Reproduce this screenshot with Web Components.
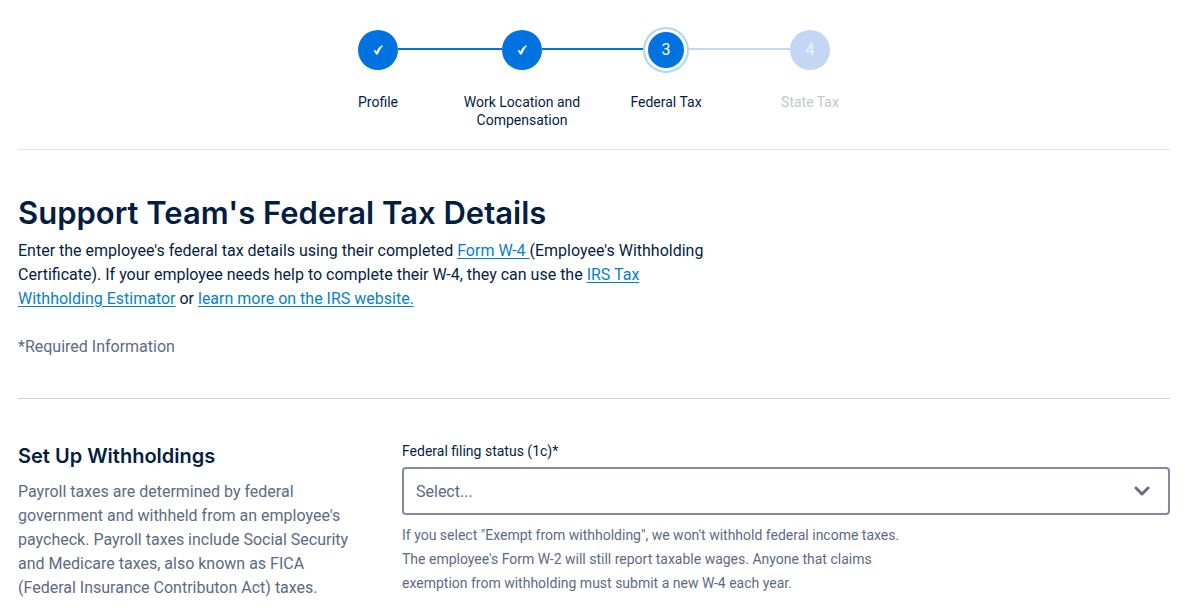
<!DOCTYPE html>
<html lang="en">
<head>
  <meta charset="utf-8">
  <meta name="viewport" content="width=device-width, initial-scale=1">
  <title>Federal Tax Details</title>
  <style>
    :root {
      --navy: #041e42;
      --slate: #5c6b84;
      --blue: #0073e0;
      --link: #0a7fc9;
      --pale-blue: #c3d6f4;
    }

    body {
      margin: 0;
      background: #fff;
      color: var(--navy);
      font: 16px/24px Roboto, "Liberation Sans", sans-serif;
    }
  </style>
</head>
<body>
  <tax-page>
    <step-tracker slot="progress">
      <step-item state="done" number="1">Profile</step-item>
      <step-item state="done" number="2">Work Location and Compensation</step-item>
      <step-item state="current" number="3">Federal Tax</step-item>
      <step-item state="upcoming" number="4">State Tax</step-item>
    </step-tracker>

    <page-intro>
      <span slot="title">Support Team's Federal Tax Details</span>
      Enter the employee's federal tax details using their completed
      <a href="#form-w4">Form W-4 </a>(Employee's Withholding Certificate). If your
      employee needs help to complete their W-4, they can use the
      <a href="#estimator">IRS Tax Withholding Estimator</a> or
      <a href="#irs">learn more on the IRS website.</a>
      <span slot="note">*Required Information</span>
    </page-intro>

    <form-section>
      <span slot="title">Set Up Withholdings</span>
      <span slot="description">Payroll taxes are determined by federal government and withheld from an employee's paycheck. Payroll taxes include Social Security and Medicare taxes, also known as FICA (Federal Insurance Contributon Act) taxes.</span>
      <select-field label="Federal filing status (1c)*" placeholder="Select...">
        If you select "Exempt from withholding", we won't withhold federal income taxes. The employee's Form W-2 will still report taxable wages. Anyone that claims exemption from withholding must submit a new W-4 each year.
      </select-field>
    </form-section>
  </tax-page>

  <script>
    class BaseElement extends HTMLElement {
      constructor() {
        super();
        this.attachShadow({ mode: 'open' });
      }

      connectedCallback() {
        this.shadowRoot.innerHTML = this.render();
      }
    }

    class TaxPage extends BaseElement {
      render() {
        return `
          <style>
            :host {
              display: block;
              padding: 27px 23px 16px 18px;
            }
          </style>

          <slot name="progress"></slot>
          <main><slot></slot></main>
        `;
      }
    }

    class StepTracker extends BaseElement {
      render() {
        return `
          <style>
            :host {
              display: block;
              padding-bottom: 20px;
              border-bottom: 1px solid #e4e5e7;
            }

            nav {
              display: flex;
              justify-content: center;
            }
          </style>

          <nav aria-label="Progress"><slot></slot></nav>
        `;
      }
    }

    /**
     * One step: a marker with half a connector on each side, and a label.
     */
    class StepItem extends BaseElement {
      get done() {
        return this.getAttribute('state') === 'done';
      }

      render() {
        return `
          <style>
            :host {
              display: flex;
              flex-direction: column;
              gap: 20px;
              width: 144px;
              font-size: 14px;
              line-height: 18px;
              text-align: center;
              --before: var(--blue);
              --after: var(--blue);
            }

            :host([state="current"]) { --after: var(--pale-blue); }
            :host([state="upcoming"]) { --before: var(--pale-blue); }
            :host(:first-child) { --before: transparent; }
            :host(:last-child) { --after: transparent; }

            .track {
              display: flex;
              align-items: center;
              height: 46px;
            }

            .line {
              flex: 1;
              height: 2px;
              margin-bottom: 2px;
              background: var(--before);
            }

            .marker + .line { background: var(--after); }

            .marker {
              display: grid;
              place-items: center;
              width: 40px;
              height: 40px;
              border-radius: 50%;
              background: var(--blue);
              color: #fff;
              font-size: 16px;
            }

            svg { display: block; }

            :host([state="current"]) .marker {
              box-sizing: border-box;
              width: 46px;
              height: 46px;
              padding: 3px;
              border: 2px solid #b0d5f5;
              background-clip: content-box;
            }

            :host([state="upcoming"]) .marker {
              background: var(--pale-blue);
              color: #eef4fd;
            }

            .label { padding: 0 8px; }

            :host([state="upcoming"]) .label { color: #c3c7cf; }
          </style>

          <div class="track">
            <span class="line"></span>
            <span class="marker">${this.done ? this.check() : this.getAttribute('number')}</span>
            <span class="line"></span>
          </div>
          <div class="label"><slot></slot></div>
        `;
      }

      check() {
        return `
          <svg width="10" height="10" viewBox="0 0 10 10" role="img" aria-label="Done">
            <path d="M.7 6C1.600 5 2.600 5 3.200 6.300L3.600 7C4.600 4.300 6.500 1.800 8.200.9 8.800.6 9.300.7 9.700.8 7.800 3 6.200 5.700 5 8.800 4.600 9.600 3.100 9.700 2.800 8.900 2.200 7.300 1.700 6.400.7 6Z" fill="#fff" stroke="#fff" stroke-width=".4"/>
          </svg>
        `;
      }
    }

    class PageIntro extends BaseElement {
      render() {
        return `
          <style>
            :host {
              display: block;
              padding: 41px 0 39px;
              border-bottom: 1px solid #ced2dc;
            }

            h1 {
              margin: 0 0 4px;
              font: 600 31px/44px Inter, "Liberation Sans", sans-serif;
            }

            p {
              max-width: 704px;
              margin: 0;
            }

            .note {
              margin-top: 24px;
              color: var(--slate);
            }

            ::slotted(a) {
              color: var(--link);
              text-decoration: underline;
              text-underline-offset: 2px;
            }
          </style>

          <h1><slot name="title"></slot></h1>
          <p><slot></slot></p>
          <p class="note"><slot name="note"></slot></p>
        `;
      }
    }

    class FormSection extends BaseElement {
      render() {
        return `
          <style>
            :host {
              display: grid;
              grid-template-columns: 1fr 2fr;
              padding-top: 40px;
            }

            .about { padding-right: 44px; }

            h2 {
              margin: 0 0 6px;
              font: 600 20px/35px Inter, "Liberation Sans", sans-serif;
            }

            p {
              margin: 0;
              color: var(--slate);
            }
          </style>

          <div class="about">
            <h2><slot name="title"></slot></h2>
            <p><slot name="description"></slot></p>
          </div>
          <div><slot></slot></div>
        `;
      }
    }

    class SelectField extends BaseElement {
      render() {
        return `
          <style>
            :host {
              display: block;
              font-size: 14px;
            }

            label { display: block; }

            .control {
              display: grid;
              align-items: center;
              margin: 4px 0 8px;
            }

            select, svg { grid-area: 1 / 1; }

            select {
              width: 100%;
              height: 48px;
              padding: 2px 48px 0 12px;
              border: 2px solid #7f8ca0;
              border-radius: 4px;
              appearance: none;
              background: #fff;
              color: var(--slate);
              font: inherit;
              font-size: 16px;
            }

            svg {
              justify-self: end;
              margin-right: 20px;
              pointer-events: none;
            }

            p {
              max-width: 520px;
              margin: 0;
              color: var(--slate);
            }
          </style>

          <label for="field">${this.getAttribute('label')}</label>
          <div class="control">
            <select id="field" aria-describedby="help">
              <option>${this.getAttribute('placeholder')}</option>
            </select>
            <svg width="16" height="10" viewBox="0 0 16 10" aria-hidden="true">
              <path d="M2 2 8 8 14 2" fill="none" stroke="#677083" stroke-width="3" stroke-linecap="round" stroke-linejoin="round"/>
            </svg>
          </div>
          <p id="help"><slot></slot></p>
        `;
      }
    }

    customElements.define('tax-page', TaxPage);
    customElements.define('step-tracker', StepTracker);
    customElements.define('step-item', StepItem);
    customElements.define('page-intro', PageIntro);
    customElements.define('form-section', FormSection);
    customElements.define('select-field', SelectField);
  </script>
</body>
</html>
